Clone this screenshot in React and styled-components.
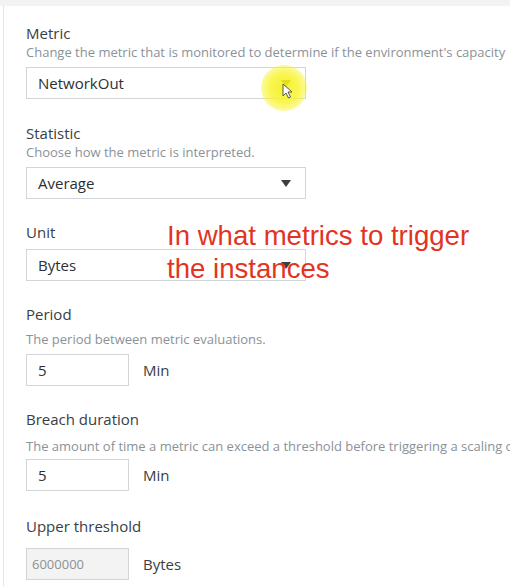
import React from "react";
import styled, { createGlobalStyle } from "styled-components";

const GlobalStyle = createGlobalStyle`
  html, body {
    margin: 0;
    padding: 0;
    background: #ffffff;
    font-family: "Open Sans", "Liberation Sans", sans-serif;
  }
`;

const Page = styled.div`
  position: relative;
  width: 510px;
  height: 586px;
  overflow: hidden;
  background: #ffffff;
`;

const TopBar = styled.div`
  height: 6px;
  background: #f2f3f3;
`;

const Panel = styled.div`
  margin-left: 3px;
  border-left: 1px solid #e4e6e6;
  padding: 17px 0 0 22px;
  height: 580px;
  box-sizing: border-box;
`;

const Field = styled.div`
  margin-top: ${(p) => p.$top || 0}px;
`;

const Label = styled.div`
  font-size: 15px;
  line-height: 20px;
  color: #383e44;
  white-space: nowrap;
`;

const Desc = styled.div`
  margin-top: ${(p) => p.$gap || 0}px;
  font-size: 13px;
  line-height: 18px;
  color: #8a9298;
  white-space: nowrap;
`;

const Select = styled.div`
  position: relative;
  margin-top: ${(p) => p.$gap || 6}px;
  width: 280px;
  height: 32px;
  box-sizing: border-box;
  border: 1px solid #d3d6d8;
  display: flex;
  align-items: center;
  justify-content: space-between;
  padding: 0 14px 0 11px;
  font-size: 15px;
  color: #2b3035;
`;

const Caret = styled.span`
  width: 0;
  height: 0;
  border-left: 5px solid transparent;
  border-right: 5px solid transparent;
  border-top: 7px solid ${(p) => p.$color || "#3b3f43"};
`;

const InputRow = styled.div`
  margin-top: ${(p) => p.$gap || 6}px;
  display: flex;
  align-items: center;
  gap: 14px;
`;

const Input = styled.div`
  width: 103px;
  height: 32px;
  box-sizing: border-box;
  border: 1px solid #d3d6d8;
  background: ${(p) => (p.$disabled ? "#f3f3f3" : "#ffffff")};
  display: flex;
  align-items: center;
  padding-left: ${(p) => (p.$disabled ? 5 : 11)}px;
  font-size: ${(p) => (p.$disabled ? 13 : 15)}px;
  color: ${(p) => (p.$disabled ? "#8d9196" : "#2b3035")};
`;

const Unit = styled.span`
  font-size: 15px;
  color: #383e44;
`;

const Highlight = styled.div`
  position: absolute;
  left: 261px;
  top: 65px;
  width: 46px;
  height: 46px;
  border-radius: 50%;
  background: radial-gradient(
    circle,
    rgba(245, 240, 20, 0.9) 0%,
    rgba(248, 244, 40, 0.8) 45%,
    rgba(255, 252, 150, 0) 100%
  );
  pointer-events: none;
`;

const Cursor = styled.svg`
  position: absolute;
  left: 282px;
  top: 83px;
`;

const Note = styled.div`
  position: absolute;
  left: 167px;
  top: 219px;
  font-family: "Liberation Sans", Arial, sans-serif;
  font-size: 27.6px;
  line-height: 33px;
  color: #e2341f;
  white-space: nowrap;
`;

export default function App() {
  return (
    <Page>
      <GlobalStyle />
      <TopBar />
      <Panel>
        <Field>
          <Label>Metric</Label>
          <Desc>
            Change the metric that is monitored to determine if the environment's capacity
          </Desc>
          <Select>
            NetworkOut
            <Caret $color="#6b6a1c" />
          </Select>
        </Field>

        <Field $top={24}>
          <Label>Statistic</Label>
          <Desc>Choose how the metric is interpreted.</Desc>
          <Select>
            Average
            <Caret />
          </Select>
        </Field>

        <Field $top={23}>
          <Label>Unit</Label>
          <Select $gap={7}>
            Bytes
            <Caret />
          </Select>
        </Field>

        <Field $top={23}>
          <Label>Period</Label>
          <Desc $gap={6}>The period between metric evaluations.</Desc>
          <InputRow>
            <Input>5</Input>
            <Unit>Min</Unit>
          </InputRow>
        </Field>

        <Field $top={23}>
          <Label>Breach duration</Label>
          <Desc $gap={8}>
            The amount of time a metric can exceed a threshold before triggering a scaling operation.
          </Desc>
          <InputRow $gap={4}>
            <Input>5</Input>
            <Unit>Min</Unit>
          </InputRow>
        </Field>

        <Field $top={25}>
          <Label>Upper threshold</Label>
          <InputRow $gap={12}>
            <Input $disabled>6000000</Input>
            <Unit>Bytes</Unit>
          </InputRow>
        </Field>
      </Panel>

      <Highlight />
      <Cursor width="12" height="16" viewBox="0 0 12 16">
        <path
          d="M1 1 L1 13 L4 10 L6.5 15 L8.5 14 L6 9 L10 9 Z"
          fill="#ffffff"
          stroke="#555555"
          strokeWidth="1"
          strokeLinejoin="round"
        />
      </Cursor>

      <Note>
        In what metrics to trigger
        <br />
        the instances
      </Note>
    </Page>
  );
}
